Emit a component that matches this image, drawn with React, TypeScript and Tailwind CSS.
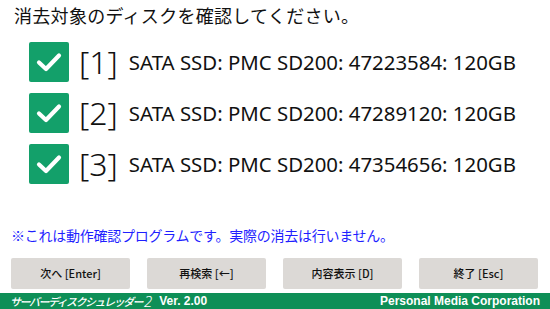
const disks = [
  { no: 1, label: "SATA SSD: PMC SD200: 47223584: 120GB" },
  { no: 2, label: "SATA SSD: PMC SD200: 47289120: 120GB" },
  { no: 3, label: "SATA SSD: PMC SD200: 47354656: 120GB" },
];

const buttons = ["次へ [Enter]", "再検索 [←]", "内容表示 [D]", "終了 [Esc]"];

const CheckBox = () => (
  <div className="w-10 h-10 rounded-[2px] bg-[#13a06a] flex items-center justify-center shrink-0">
    <svg width="28" height="28" viewBox="0 0 28 28">
      <path d="M4 14.5 L11 21 L24 7.5" fill="none" stroke="white" strokeWidth="4.2" strokeLinecap="round" strokeLinejoin="round" />
    </svg>
  </div>
);

export default function App() {
  return (
    <div
      className="w-[550px] h-[309px] bg-white flex flex-col overflow-hidden text-[#111]"
      style={{ fontFamily: '"Noto Sans CJK JP", "Noto Sans", sans-serif' }}
    >
      <h1 className="pl-[14px] pt-[5px] text-[18px] leading-[20px] font-normal tracking-[0.3px]">
        消去対象のディスクを確認してください。
      </h1>

      <div className="flex flex-col gap-[11px] pl-[29px] mt-[17px]">
        {disks.map((d) => (
          <div key={d.no} className="flex items-center h-10">
            <CheckBox />
            <span
              className="ml-[10px] text-[32px] leading-none font-light"
              style={{ fontFamily: '"Noto Sans", sans-serif' }}
            >
              [{d.no}]
            </span>
            <span
              className="ml-[11px] text-[20.4px] leading-none"
              style={{ fontFamily: '"Noto Sans", sans-serif' }}
            >
              {d.label}
            </span>
          </div>
        ))}
      </div>

      <p className="pl-[11px] mt-[42px] text-[14px] leading-[18px] text-[#1f1fff] tracking-[-0.25px]">
        ※これは動作確認プログラムです。実際の消去は行いません。
      </p>

      <div className="flex gap-[17px] px-[11px] mt-[14px]">
        {buttons.map((b) => (
          <button
            key={b}
            className="w-[119px] h-[31px] bg-[#dcd9d6] rounded-[2px] text-[11px] font-medium text-[#111] flex items-center justify-center"
          >
            {b}
          </button>
        ))}
      </div>

      <div className="mt-auto h-[16px] bg-[#0e8f57] flex items-center justify-between pl-[10px] pr-[10px] text-white leading-none">
        <span className="flex items-center">
          <span className="italic font-medium text-[11px] tracking-[-1.5px]">サーバーディスクシュレッダー</span>
          <span className="italic font-light text-[15px] ml-[2px]" style={{ fontFamily: '"Noto Sans", sans-serif' }}>2</span>
          <span className="font-bold text-[12px] ml-[7px]" style={{ fontFamily: '"Liberation Sans", sans-serif' }}>
            Ver. 2.00
          </span>
        </span>
        <span className="font-bold text-[12px]" style={{ fontFamily: '"Liberation Sans", sans-serif' }}>
          Personal Media Corporation
        </span>
      </div>
    </div>
  );
}
